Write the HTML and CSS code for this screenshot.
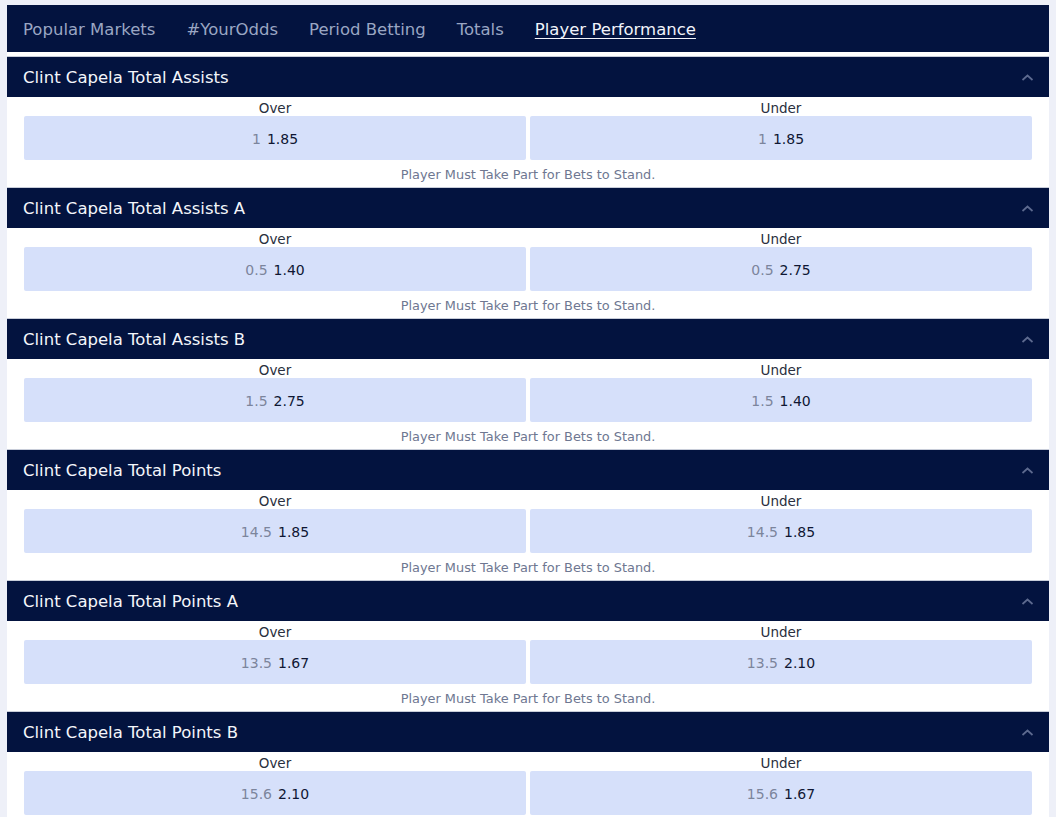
FILE: index.html
```html
<!DOCTYPE html>
<html lang="en">
<head>
<meta charset="utf-8">
<title>Player Performance</title>
<link rel="stylesheet" href="styles.css">
</head>
<body>
<div class="frame">
  <div class="panel">
    <nav class="tabs">
      <a class="tab">Popular Markets</a>
      <a class="tab">#YourOdds</a>
      <a class="tab">Period Betting</a>
      <a class="tab">Totals</a>
      <a class="tab active">Player Performance</a>
    </nav>

    <section class="market">
      <header class="market-head"><span>Clint Capela Total Assists</span><svg class="chev" viewBox="0 0 12 7"><path d="M1 6 L6 1.5 L11 6"/></svg></header>
      <div class="market-body">
        <div class="labels"><span>Over</span><span>Under</span></div>
        <div class="odds">
          <div class="cell"><span class="line">1</span><span class="price">1.85</span></div>
          <div class="cell"><span class="line">1</span><span class="price">1.85</span></div>
        </div>
        <p class="note">Player Must Take Part for Bets to Stand.</p>
      </div>
    </section>

    <section class="market">
      <header class="market-head"><span>Clint Capela Total Assists A</span><svg class="chev" viewBox="0 0 12 7"><path d="M1 6 L6 1.5 L11 6"/></svg></header>
      <div class="market-body">
        <div class="labels"><span>Over</span><span>Under</span></div>
        <div class="odds">
          <div class="cell"><span class="line">0.5</span><span class="price">1.40</span></div>
          <div class="cell"><span class="line">0.5</span><span class="price">2.75</span></div>
        </div>
        <p class="note">Player Must Take Part for Bets to Stand.</p>
      </div>
    </section>

    <section class="market">
      <header class="market-head"><span>Clint Capela Total Assists B</span><svg class="chev" viewBox="0 0 12 7"><path d="M1 6 L6 1.5 L11 6"/></svg></header>
      <div class="market-body">
        <div class="labels"><span>Over</span><span>Under</span></div>
        <div class="odds">
          <div class="cell"><span class="line">1.5</span><span class="price">2.75</span></div>
          <div class="cell"><span class="line">1.5</span><span class="price">1.40</span></div>
        </div>
        <p class="note">Player Must Take Part for Bets to Stand.</p>
      </div>
    </section>

    <section class="market">
      <header class="market-head"><span>Clint Capela Total Points</span><svg class="chev" viewBox="0 0 12 7"><path d="M1 6 L6 1.5 L11 6"/></svg></header>
      <div class="market-body">
        <div class="labels"><span>Over</span><span>Under</span></div>
        <div class="odds">
          <div class="cell"><span class="line">14.5</span><span class="price">1.85</span></div>
          <div class="cell"><span class="line">14.5</span><span class="price">1.85</span></div>
        </div>
        <p class="note">Player Must Take Part for Bets to Stand.</p>
      </div>
    </section>

    <section class="market">
      <header class="market-head"><span>Clint Capela Total Points A</span><svg class="chev" viewBox="0 0 12 7"><path d="M1 6 L6 1.5 L11 6"/></svg></header>
      <div class="market-body">
        <div class="labels"><span>Over</span><span>Under</span></div>
        <div class="odds">
          <div class="cell"><span class="line">13.5</span><span class="price">1.67</span></div>
          <div class="cell"><span class="line">13.5</span><span class="price">2.10</span></div>
        </div>
        <p class="note">Player Must Take Part for Bets to Stand.</p>
      </div>
    </section>

    <section class="market">
      <header class="market-head"><span>Clint Capela Total Points B</span><svg class="chev" viewBox="0 0 12 7"><path d="M1 6 L6 1.5 L11 6"/></svg></header>
      <div class="market-body">
        <div class="labels"><span>Over</span><span>Under</span></div>
        <div class="odds">
          <div class="cell"><span class="line">15.6</span><span class="price">2.10</span></div>
          <div class="cell"><span class="line">15.6</span><span class="price">1.67</span></div>
        </div>
      </div>
    </section>
  </div>
</div>
</body>
</html>
```

FILE: styles.css
```css
html, body {
  margin: 0;
  padding: 0;
  background: #ffffff;
}

body {
  font-family: "DejaVu Sans", Verdana, sans-serif;
}

.frame {
  height: 817px;
  overflow: hidden;
  background: #eef0f8;
  padding: 5px 7px 0 7px;
  box-sizing: border-box;
}

.panel {
  background: #ffffff;
  height: 100%;
}

.tabs {
  height: 47px;
  background: #03133f;
  display: flex;
  align-items: center;
  gap: 31px;
  padding: 2px 16px 0 16px;
  box-sizing: border-box;
  margin-bottom: 4px;
}

.tab {
  font-size: 16.5px;
  color: #9aa6c3;
  white-space: nowrap;
}

.tab.active {
  color: #f1f3fa;
  text-decoration: underline;
  text-underline-offset: 3px;
}

.market-head {
  height: 41px;
  background: #03133f;
  color: #f4f6fb;
  display: flex;
  align-items: center;
  justify-content: space-between;
  padding: 1px 15px 0 16px;
  font-size: 16.5px;
  border-top: 1px solid #c8cdd9;
  box-sizing: border-box;
}

.chev {
  width: 13px;
  height: 7px;
  fill: none;
  stroke: #5d6a8f;
  stroke-width: 1.7;
}

.market-body {
  padding: 0 17px;
}

.labels {
  display: grid;
  grid-template-columns: 1fr 1fr;
  gap: 4px;
  height: 19px;
  padding-top: 3px;
  box-sizing: border-box;
  align-items: center;
  font-size: 13.5px;
  color: #2a2f3d;
  text-align: center;
}

.odds {
  display: grid;
  grid-template-columns: 1fr 1fr;
  gap: 4px;
}

.cell {
  height: 44px;
  background: #d6e0fa;
  border-radius: 2px;
  display: flex;
  align-items: center;
  justify-content: center;
  gap: 6px;
  font-size: 14px;
  padding-top: 1px;
  box-sizing: border-box;
}

.line {
  color: #7c859c;
}

.price {
  color: #0f1733;
}

.note {
  margin: 0;
  height: 27px;
  padding-top: 1px;
  box-sizing: border-box;
  display: flex;
  align-items: center;
  justify-content: center;
  font-size: 12.9px;
  color: #6e7791;
}
```
